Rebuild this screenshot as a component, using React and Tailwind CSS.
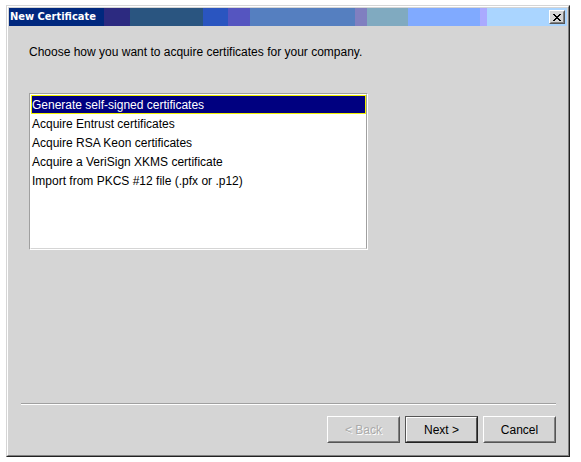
import React, { useState } from "react";

const options = [
  "Generate self-signed certificates",
  "Acquire Entrust certificates",
  "Acquire RSA Keon certificates",
  "Acquire a VeriSign XKMS certificate",
  "Import from PKCS #12 file (.pfx or .p12)",
];

const raised = "border border-t-white border-l-white border-r-[#555] border-b-[#555]";
const raisedInner = "border border-t-[#d5d5d5] border-l-[#d5d5d5] border-r-[#808080] border-b-[#808080]";

const TitleBar = () => (
  <div className="flex h-[18px] items-center justify-between pl-px pr-[2px] bg-[linear-gradient(to_right,#00287e_17%,#2c2a80_17%_21.7%,#2a5580_21.7%_34.8%,#2a55c0_34.8%_39.2%,#5555c0_39.2%_43.2%,#557fc0_43.2%_62%,#807fc0_62%_64.2%,#80aac0_64.2%_71.5%,#80aaff_71.5%_84.4%,#aaaaff_84.4%_85.7%,#aad5ff_85.7%)]">
    <h1 className="font-['DejaVu_Sans_Condensed','DejaVu_Sans',sans-serif] text-[11px] leading-[18px] font-bold text-white">New Certificate</h1>
    <button type="button" aria-label="Close" className={`h-[14px] w-4 bg-[#d5d5d5] ${raised}`}>
      <span className={`flex h-full items-center justify-center ${raisedInner}`}>
        <svg width="8" height="7" viewBox="0 0 8 7" shapeRendering="crispEdges" fill="#000">
          <path d="M0 0h2v1h1v1h2V1h1V0h2v1H7v1H6v1H5v1h1v1h1v1h1v1H6V6H5V5H3v1H2v1H0V6h1V5h1V4h1V3H2V2H1V1H0z" />
        </svg>
      </span>
    </button>
  </div>
);

const WizardButton = ({ children, disabled, primary }) => (
  <button
    type="button"
    disabled={disabled}
    className={`h-[27px] w-[73px] disabled:text-[#aaa] disabled:[text-shadow:1px_1px_0_#fff] ${primary ? "border border-t-[#555] border-l-[#555] border-r-[#222] border-b-[#222]" : raised}`}
  >
    <span className={`flex h-full items-center justify-center ${primary ? raised : raisedInner}`}>{children}</span>
  </button>
);

const App = () => {
  const [selected, setSelected] = useState(0);

  return (
    <div className="flex min-h-screen bg-white pt-[5px] pr-[11px] pb-[5px] pl-[6px] font-['Liberation_Sans',Arial,sans-serif] text-[12px] leading-4 text-black">
      <main className="flex flex-1 border border-t-[#d5d5d5] border-l-[#d5d5d5] border-r-[#222] border-b-[#222]">
        <div className="flex flex-1 flex-col border border-t-white border-l-white border-r-[#808080] border-b-[#808080] bg-[#d5d5d5] p-px">
          <TitleBar />
          <div className="flex flex-1 flex-col px-5 pt-[18px]">
            <p id="prompt">Choose how you want to acquire certificates for your company.</p>
            <div className="mt-[33px] h-[157px] w-full max-w-[339px] border border-t-[#a0a0a0] border-l-[#a0a0a0] border-r-white border-b-white">
              <div role="listbox" aria-labelledby="prompt" className="h-full border border-t-white border-l-white border-r-[#a0a0a0] border-b-[#d5d5d5] bg-white">
                {options.map((label, i) => (
                  <button
                    key={label}
                    type="button"
                    role="option"
                    aria-selected={i === selected}
                    onClick={() => setSelected(i)}
                    className={`block h-[19px] w-full border pt-[2px] text-left leading-[15px] ${i === selected ? "border-[#f0f000] bg-[#000080] text-white" : "border-transparent"}`}
                  >
                    {label}
                  </button>
                ))}
              </div>
            </div>
          </div>
          <footer className="pr-[11px] pb-[11px] pl-3">
            <hr className="h-[2px] border-t border-b border-t-[#a0a0a0] border-b-white" />
            <div className="mt-[11px] flex justify-end gap-[5px]">
              <WizardButton disabled>&lt; Back</WizardButton>
              <WizardButton primary>Next &gt;</WizardButton>
              <WizardButton>Cancel</WizardButton>
            </div>
          </footer>
        </div>
      </main>
    </div>
  );
};

export default App;
